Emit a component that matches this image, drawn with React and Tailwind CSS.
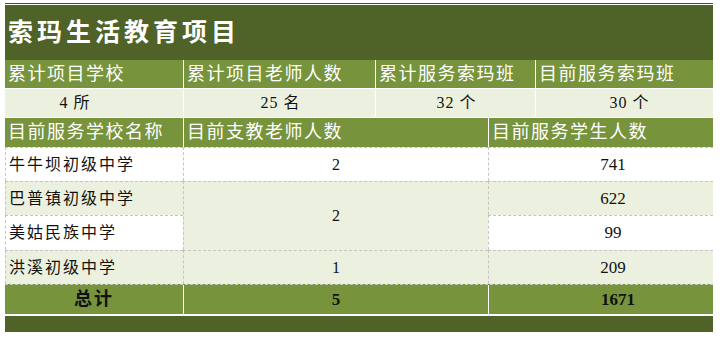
const cjk = { fontFamily: '"Liberation Serif", "Noto Sans CJK SC", serif' };

const topHeads = ['累计项目学校', '累计项目老师人数', '累计服务索玛班', '目前服务索玛班'];
const topValues = ['4 所', '25 名', '32 个', '30 个'];
const topWidths = ['w-[178px]', 'w-[192px]', 'w-[160px]', 'w-[178px]'];

const schools = [
  { name: '牛牛坝初级中学', students: 741, white: true },
  { name: '巴普镇初级中学', students: 622, white: false },
  { name: '美姑民族中学', students: 99, white: true },
  { name: '洪溪初级中学', students: 209, white: false },
];

export default function App() {
  return (
    <div className="w-[721px] h-[338px] bg-white pt-[3px] pl-[5px] text-[#111]" style={cjk}>
      <div className="w-[708px] border-t border-[#3f4f1f] pt-px">
        {/* title bar */}
        <div className="h-[55px] bg-[#4f6228] flex items-center pl-[3px]">
          <h1 className="text-white text-[25px] font-bold tracking-[4px] leading-none">索玛生活教育项目</h1>
        </div>

        {/* summary headers */}
        <div className="flex h-[29px] bg-[#77933c] border-b border-white">
          {topHeads.map((h, i) => (
            <div
              key={h}
              className={`${topWidths[i]} ${i > 0 ? 'border-l border-white' : ''} flex items-center pl-[3px] text-white text-[18px] tracking-[1.5px] whitespace-nowrap`}
            >
              {h}
            </div>
          ))}
        </div>

        {/* summary values */}
        <div className="flex h-[29px] bg-[#ebf1de] border-b border-white">
          {topValues.map((v, i) => (
            <div
              key={v}
              className={`${topWidths[i]} ${i > 0 ? 'border-l border-white' : ''} ${i === 0 ? 'pr-[38px]' : i === 3 ? 'pl-[10px]' : 'pl-[2px]'} flex items-center justify-center text-[16px] tracking-[1px]`}
            >
              {v}
            </div>
          ))}
        </div>

        {/* detail headers */}
        <div className="flex h-[29px] bg-[#77933c] text-white text-[18px] tracking-[1.5px]">
          <div className="w-[178px] flex items-center pl-[3px] whitespace-nowrap">目前服务学校名称</div>
          <div className="w-[305px] border-l border-white flex items-center pl-[3px] whitespace-nowrap">目前支教老师人数</div>
          <div className="w-[225px] border-l border-white flex items-center pl-[3px] whitespace-nowrap">目前服务学生人数</div>
        </div>

        {/* detail rows */}
        <div className="grid grid-cols-[178px_305px_225px] grid-rows-[34px_34px_35px_34px] text-[16px]">
          {schools.map((s, i) => (
            <div
              key={s.name}
              style={{ gridRow: i + 1, gridColumn: 1 }}
              className={`${s.white ? 'bg-white' : 'bg-[#ebf1de]'} border-t border-l border-dashed border-[#c4c4c4] flex items-center pl-[3px] tracking-[2px] whitespace-nowrap`}
            >
              {s.name}
            </div>
          ))}
          <div style={{ gridRow: 1, gridColumn: 2 }} className="bg-white border-t border-l border-dashed border-[#c4c4c4] flex items-center justify-center">2</div>
          <div style={{ gridRow: '2 / span 2', gridColumn: 2 }} className="bg-[#ebf1de] border-t border-l border-dashed border-[#c4c4c4] flex items-center justify-center">2</div>
          <div style={{ gridRow: 4, gridColumn: 2 }} className="bg-[#ebf1de] border-t border-l border-dashed border-[#c4c4c4] flex items-center justify-center">1</div>
          {schools.map((s, i) => (
            <div
              key={s.students}
              style={{ gridRow: i + 1, gridColumn: 3 }}
              className={`${s.white ? 'bg-white' : 'bg-[#ebf1de]'} border-t border-l border-dashed border-[#c4c4c4] flex items-center justify-center pl-[24px] text-[17px]`}
            >
              {s.students}
            </div>
          ))}
        </div>

        {/* total row */}
        <div className="flex h-[30px] bg-[#77933c] border-t border-dashed border-[#c4c4c4] font-bold text-[17px] text-[#111]">
          <div className="w-[178px] flex items-center justify-center tracking-[2px] text-[18px]">总计</div>
          <div className="w-[305px] border-l border-white flex items-center justify-center">5</div>
          <div className="w-[225px] border-l border-white flex items-center justify-center pl-[34px]">1671</div>
        </div>
        <div className="h-[18px] bg-[#4f6228] border-t-2 border-white"></div>
      </div>
    </div>
  );
}
